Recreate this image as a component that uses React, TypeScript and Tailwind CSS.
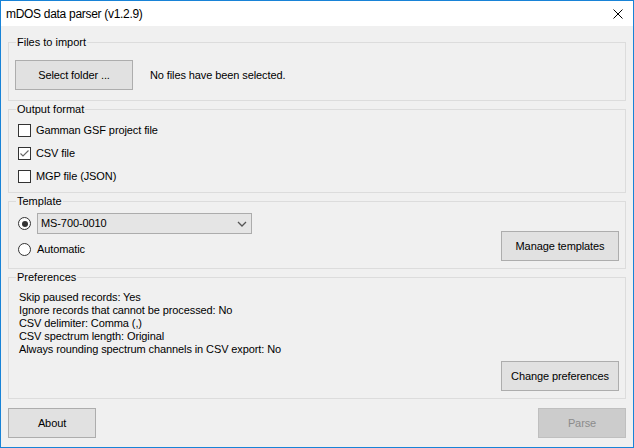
import React from "react";

const font = "font-['Liberation_Sans',Arial,sans-serif]";

function Button({ children, disabled = false, className = "" }: { children: React.ReactNode; disabled?: boolean; className?: string }) {
  return (
    <button
      disabled={disabled}
      className={
        "h-[30px] flex items-center justify-center border text-[11px] leading-[13px] tracking-[-0.1px] " +
        (disabled
          ? "bg-[#cccccc] border-[#bfbfbf] text-[#8b8b8b] "
          : "bg-[#e1e1e1] border-[#adadad] text-black ") +
        className
      }
    >
      {children}
    </button>
  );
}

function GroupBox({ title, children }: { title: string; children: React.ReactNode }) {
  return (
    <fieldset className="border border-[#dcdcdc] min-w-0">
      <legend className="ml-[7px] px-[1px] text-[11px] leading-[13px] text-black">{title}</legend>
      {children}
    </fieldset>
  );
}

function CheckBox({ label, checked = false }: { label: string; checked?: boolean }) {
  return (
    <div className="h-[23px] flex items-center">
      <span className="w-[13px] h-[13px] border border-[#333333] bg-white flex items-center justify-center">
        {checked && (
          <svg width="11" height="11" viewBox="0 0 11 11">
            <polyline points="1.5,5.5 4,8 9.5,2.5" fill="none" stroke="#666666" strokeWidth="1.1" />
          </svg>
        )}
      </span>
      <span className="ml-[5px] text-[11px] leading-[13px] tracking-[-0.1px]">{label}</span>
    </div>
  );
}

function Radio({ checked = false }: { checked?: boolean }) {
  return (
    <span className="w-[13px] h-[13px] rounded-full border border-[#333333] bg-white flex items-center justify-center shrink-0">
      {checked && <span className="w-[6px] h-[6px] rounded-full bg-[#333333]" />}
    </span>
  );
}

export default function App() {
  const prefs = [
    "Skip paused records: Yes",
    "Ignore records that cannot be processed: No",
    "CSV delimiter: Comma (,)",
    "CSV spectrum length: Original",
    "Always rounding spectrum channels in CSV export: No",
  ];

  return (
    <div className={"w-[634px] h-[448px] border border-[#1883d7] bg-[#f0f0f0] flex flex-col text-black " + font}>
      {/* Title bar */}
      <div className="h-[25px] bg-white flex items-center justify-between pl-[5px] pr-[10px] shrink-0">
        <span className="text-[12px] leading-[16px] tracking-[-0.3px]">mDOS data parser (v1.2.9)</span>
        <svg width="10" height="10" viewBox="0 0 10 10">
          <path d="M0.5 0.5 L9.5 9.5 M9.5 0.5 L0.5 9.5" stroke="#000" strokeWidth="1" />
        </svg>
      </div>

      {/* Client area */}
      <div className="flex-1 flex flex-col px-[7px] pt-[10px] pb-[9px]">
        <div className="flex flex-col gap-[2px]">
          <GroupBox title="Files to import">
            <div className="pt-[11px] pb-[10px] px-[6px] flex items-center">
              <Button className="w-[118px]">Select folder ...</Button>
              <span className="ml-[17px] text-[11px] leading-[13px] tracking-[-0.1px]">No files have been selected.</span>
            </div>
          </GroupBox>

          <GroupBox title="Output format">
            <div className="pt-[3px] pb-[4px] pl-[9px]">
              <CheckBox label="Gamman GSF project file" />
              <CheckBox label="CSV file" checked />
              <CheckBox label="MGP file (JSON)" />
            </div>
          </GroupBox>

          <GroupBox title="Template">
            <div className="pt-[5px] pb-[7px] pl-[9px] pr-[6px] h-[60px] flex justify-between">
              <div className="flex flex-col">
                <div className="h-[21px] flex items-center">
                  <Radio checked />
                  <div className="ml-[6px] w-[215px] h-[21px] border border-[#acacac] bg-[#e5e5e5] flex items-center justify-between pl-[3px] pr-[4px]">
                    <span className="text-[11px] leading-[13px] tracking-[-0.1px]">MS-700-0010</span>
                    <svg width="10" height="6" viewBox="0 0 10 6">
                      <polyline points="1,1 5,5 9,1" fill="none" stroke="#555555" strokeWidth="1.3" />
                    </svg>
                  </div>
                </div>
                <div className="mt-[5px] h-[21px] flex items-center">
                  <Radio />
                  <span className="ml-[6px] text-[11px] leading-[13px] tracking-[-0.1px]">Automatic</span>
                </div>
              </div>
              <Button className="w-[118px] self-end">Manage templates</Button>
            </div>
          </GroupBox>

          <GroupBox title="Preferences">
            <div className="pt-[7px] pb-[7px] pl-[10px] pr-[6px] flex flex-col">
              {prefs.map((p) => (
                <div key={p} className="text-[11px] leading-[13px] tracking-[-0.1px]">{p}</div>
              ))}
              <Button className="w-[118px] self-end mt-[5px]">Change preferences</Button>
            </div>
          </GroupBox>
        </div>

        <div className="mt-[9px] flex justify-between">
          <Button className="w-[88px]">About</Button>
          <Button className="w-[88px]" disabled>Parse</Button>
        </div>
      </div>
    </div>
  );
}
